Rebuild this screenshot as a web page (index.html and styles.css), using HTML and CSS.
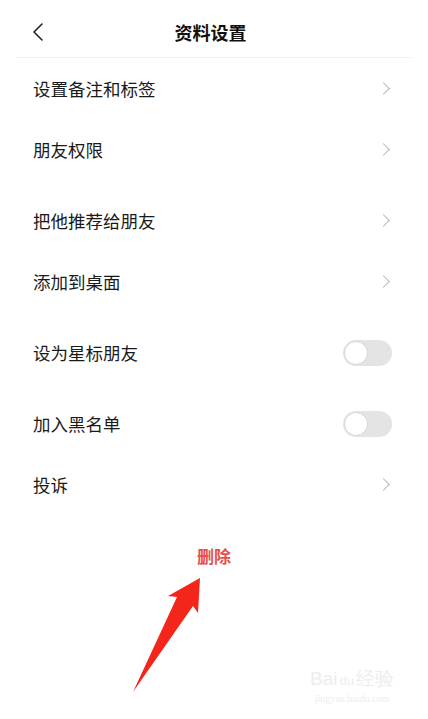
FILE: index.html
```html
<!DOCTYPE html>
<html lang="zh">
<head>
    <meta charset="UTF-8" />
    <meta name="viewport" content="width=device-width, initial-scale=1" />
    <title>资料设置</title>
    <link rel="stylesheet" href="styles.css">
</head>
<body>
    <div class="header">
        <svg class="back" width="12" height="20" viewBox="0 0 12 20">
            <path d="M10 2 L2 10 L10 18" fill="none" stroke="#222" stroke-width="1.6" stroke-linecap="round" stroke-linejoin="round"/>
        </svg>
        <h1>资料设置</h1>
    </div>

    <div class="group first">
        <div class="row"><span>设置备注和标签</span><i class="chev"></i></div>
        <div class="row"><span>朋友权限</span><i class="chev"></i></div>
    </div>
    <div class="group">
        <div class="row"><span>把他推荐给朋友</span><i class="chev"></i></div>
        <div class="row"><span>添加到桌面</span><i class="chev"></i></div>
    </div>
    <div class="group">
        <div class="row"><span>设为星标朋友</span><i class="switch"></i></div>
    </div>
    <div class="group">
        <div class="row"><span>加入黑名单</span><i class="switch"></i></div>
        <div class="row"><span>投诉</span><i class="chev"></i></div>
    </div>
    <div class="group">
        <div class="row delete">删除</div>
    </div>

    <!-- 红色箭头标注 -->
    <svg class="arrow" width="428" height="719" viewBox="0 0 428 719">
        <polygon points="133,692 177,597 168,596 200,578 198,613 193,606" fill="#f4261c"/>
    </svg>

    <div class="watermark">
        <div class="wm-logo">Bai<span class="du">du</span>经验</div>
        <div class="wm-url">jingyan.baidu.com</div>
    </div>
</body>
</html>
```

FILE: styles.css
```css
body {
    margin: 0;
    background: #fff;
    font-family: "Noto Sans CJK SC", "Noto Sans", sans-serif;
    color: #1a1a1a;
}
.header {
    position: relative;
    height: 57px;
    margin: 0 16px;
    border-bottom: 1px solid #f2f2f2;
    display: flex;
    align-items: center;
    justify-content: center;
}
.back {
    position: absolute;
    left: 16px;
    top: 22px;
}
.header h1 {
    margin: 0 7px 0 0;
    font-size: 18px;
    font-weight: bold;
    color: #111;
    padding-top: 6px;
}
.group {
    margin-top: 10px;
}
.group.first {
    margin-top: 0;
}
.row {
    height: 61px;
    display: flex;
    align-items: center;
    justify-content: space-between;
    padding: 0 36px 0 33px;
    font-size: 17.5px;
}
.chev {
    width: 8px;
    height: 8px;
    border-top: 1.3px solid #b5b5b5;
    border-right: 1.3px solid #b5b5b5;
    transform: rotate(45deg);
    margin-right: 4px;
}
.switch {
    position: relative;
    width: 49px;
    height: 26px;
    border-radius: 13px;
    background: #e4e4e4;
}
.switch::after {
    content: "";
    position: absolute;
    left: 1px;
    top: 1px;
    width: 22px;
    height: 22px;
    border-radius: 50%;
    background: #fff;
    border: 1px solid #d6d6d6;
}
.delete {
    justify-content: center;
    padding: 0;
    font-size: 17px;
    font-weight: bold;
    color: #e6504b;
}
.arrow {
    position: absolute;
    left: 0;
    top: 0;
    pointer-events: none;
}
.watermark {
    position: absolute;
    left: 310px;
    top: 668px;
    color: #ededed;
    font-family: "Liberation Sans", sans-serif;
    text-align: center;
}
.wm-logo {
    font-size: 19px;
    line-height: 22px;
}
.du {
    font-size: 13px;
    margin: 0 2px;
}
.wm-url {
    font-family: "Liberation Serif", serif;
    font-size: 10px;
    line-height: 14px;
}
```
